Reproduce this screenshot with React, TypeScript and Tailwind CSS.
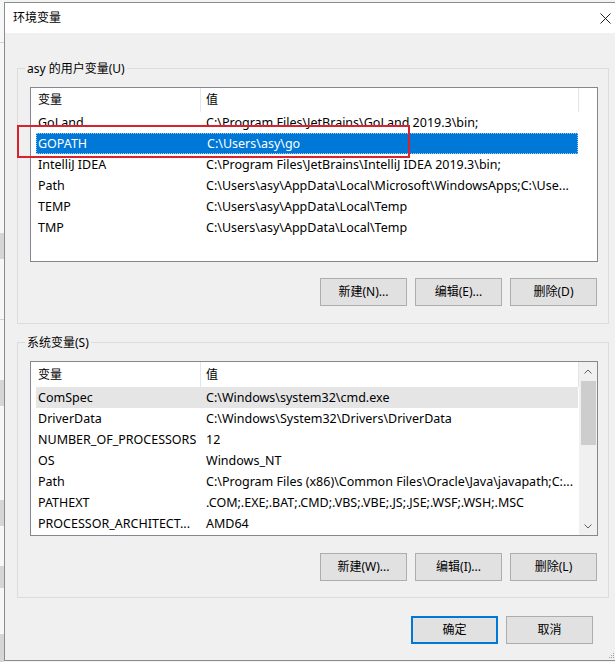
import React from 'react'

type Row = { name: string; value: string }

const userVars: Row[] = [
  { name: 'GoLand', value: 'C:\\Program Files\\JetBrains\\GoLand 2019.3\\bin;' },
  { name: 'GOPATH', value: 'C:\\Users\\asy\\go' },
  { name: 'IntelliJ IDEA', value: 'C:\\Program Files\\JetBrains\\IntelliJ IDEA 2019.3\\bin;' },
  { name: 'Path', value: 'C:\\Users\\asy\\AppData\\Local\\Microsoft\\WindowsApps;C:\\Use...' },
  { name: 'TEMP', value: 'C:\\Users\\asy\\AppData\\Local\\Temp' },
  { name: 'TMP', value: 'C:\\Users\\asy\\AppData\\Local\\Temp' },
]

const systemVars: Row[] = [
  { name: 'ComSpec', value: 'C:\\Windows\\system32\\cmd.exe' },
  { name: 'DriverData', value: 'C:\\Windows\\System32\\Drivers\\DriverData' },
  { name: 'NUMBER_OF_PROCESSORS', value: '12' },
  { name: 'OS', value: 'Windows_NT' },
  { name: 'Path', value: 'C:\\Program Files (x86)\\Common Files\\Oracle\\Java\\javapath;C:...' },
  { name: 'PATHEXT', value: '.COM;.EXE;.BAT;.CMD;.VBS;.VBE;.JS;.JSE;.WSF;.WSH;.MSC' },
  { name: 'PROCESSOR_ARCHITECT...', value: 'AMD64' },
]

function cx(...parts: (string | false | undefined)[]) {
  return parts.filter(Boolean).join(' ')
}

function Chevron({ up }: { up?: boolean }) {
  return (
    <svg width="8" height="5" viewBox="0 0 8 5" className="block">
      <path
        d={up ? 'M0.5 4.5 L4 1 L7.5 4.5' : 'M0.5 0.5 L4 4 L7.5 0.5'}
        fill="none"
        stroke="#606060"
        strokeWidth="1"
      />
    </svg>
  )
}

function VarList({
  rows,
  selected,
  hovered,
  scroll,
  headerH = 'h-[24px]',
}: {
  rows: Row[]
  selected?: number
  hovered?: number
  scroll?: boolean
  headerH?: string
}) {
  return (
    <div className="flex h-[175px] w-[568px] border border-[#828790] bg-white text-[12.5px]">
      <div className="flex min-w-0 flex-1 flex-col pl-[5px]">
        <div className={cx('flex shrink-0 items-center text-[12px]', headerH)}>
          <div className="flex h-full w-[164px] items-center pl-[2px]">变量</div>
          <div className="h-full w-px bg-[#e5e5e5]" />
          <div className="flex h-full flex-1 items-center pl-[5px]">值</div>
          <div className="h-full w-px bg-[#e5e5e5]" />
        </div>
        {rows.map((r, i) => (
          <div
            key={r.name}
            className={cx(
              'flex h-[21px] w-[542px] shrink-0 items-center pt-[1px]',
              i === selected && 'border border-dotted border-[#9cc7ee] bg-[#0078d7] text-white',
              i === hovered && 'bg-[#e5e5e5]'
            )}
          >
            <div className={cx('w-[165px] truncate', i === selected ? 'pl-[1px]' : 'pl-[2px]')}>
              {r.name}
            </div>
            <div className="flex-1 truncate pl-[5px]">{r.value}</div>
          </div>
        ))}
      </div>
      <div className="flex w-[18px] shrink-0 flex-col">
        {scroll && (
          <div className="flex h-full flex-col items-center bg-[#f0f0f0]">
            <div className="flex h-[19px] items-center justify-center">
              <Chevron up />
            </div>
            <div className="h-[64px] w-[15px] bg-[#cdcdcd]" />
            <div className="flex-1" />
            <div className="flex h-[17px] items-center justify-center">
              <Chevron />
            </div>
          </div>
        )}
      </div>
    </div>
  )
}

function Btn({ children, primary }: { children: React.ReactNode; primary?: boolean }) {
  return (
    <button
      className={cx(
        'flex h-[28px] w-[87px] items-center justify-center bg-[#e1e1e1] text-[12px]',
        primary ? 'border-2 border-[#0078d7]' : 'border border-[#adadad]'
      )}
    >
      {children}
    </button>
  )
}

function Group({
  title,
  children,
  buttons,
  listTop,
  btnTop,
}: {
  title: string
  children: React.ReactNode
  buttons: string[]
  listTop: string
  btnTop: string
}) {
  return (
    <fieldset className="ml-[12px] w-[592px] border border-[#dcdcdc] p-0">
      <legend className="ml-[7px] px-[2px] leading-[17px]">{title}</legend>
      <div className={cx('pl-[12px]', listTop)}>
        {children}
        <div className={cx('flex w-[567px] justify-end gap-[8px]', btnTop)}>
          {buttons.map((b) => (
            <Btn key={b}>{b}</Btn>
          ))}
        </div>
      </div>
    </fieldset>
  )
}

function BackStrip() {
  return (
    <div className="flex w-[4px] shrink-0 flex-col bg-[#f7f7f7]">
      <div className="mt-[40px] h-px bg-[#d4d4d4]" />
      <div className="mt-[190px] h-[26px] bg-[#d6d6d6]" />
      <div className="mt-[60px] h-px bg-[#d4d4d4]" />
      <div className="mt-[60px] h-[26px] bg-[#d6d6d6]" />
      <div className="mt-[94px] h-[26px] bg-[#d6d6d6]" />
      <div className="mt-[40px] h-[22px] bg-[#d6d6d6]" />
      <div className="mt-[46px] h-[28px] bg-[#d6d6d6]" />
    </div>
  )
}

export default function App() {
  return (
    <div
      className="relative flex h-[662px] w-[615px] overflow-hidden bg-[#f3f3f3] pt-[2px] text-[12px] text-black"
      style={{ fontFamily: '"Noto Sans", "Noto Sans CJK SC", sans-serif' }}
    >
      <BackStrip />
      <div className="flex h-[659px] w-[614px] shrink-0 flex-col border border-[#8c8c8c] bg-[#f0f0f0]">
        <div className="flex h-[30px] shrink-0 items-center justify-between bg-white pl-[8px] pr-[5px]">
          <span>环境变量</span>
          <svg width="11" height="11" viewBox="0 0 11 11" className="mr-[1px]">
            <path d="M0.5 0.5 L10.5 10.5 M10.5 0.5 L0.5 10.5" stroke="#222" strokeWidth="1" />
          </svg>
        </div>

        <div className="mt-[27px]">
          <Group
            title="asy 的用户变量(U)"
            buttons={['新建(N)...', '编辑(E)...', '删除(D)']}
            listTop="pt-[10px] pb-[17px]"
            btnTop="mt-[16px]"
          >
            <VarList rows={userVars} selected={1} />
          </Group>
        </div>

        <div className="mt-[10px]">
          <Group
            title="系统变量(S)"
            buttons={['新建(W)...', '编辑(I)...', '删除(L)']}
            listTop="pt-[10px] pb-[16px]"
            btnTop="mt-[17px]"
          >
            <VarList rows={systemVars} hovered={0} scroll headerH="h-[25px]" />
          </Group>
        </div>

        <div className="mt-[18px] flex justify-end gap-[8px] pr-[24px]">
          <Btn primary>确定</Btn>
          <Btn>取消</Btn>
        </div>
      </div>

      {/* red annotation box */}
      <div className="pointer-events-none absolute left-[17px] top-[125px] h-[33px] w-[393px] border-2 border-[#d9232c]" />

      {/* resize grip */}
      <svg width="6" height="6" viewBox="0 0 6 6" className="absolute left-[609px] top-[653px]">
        <rect x="4" y="0" width="1" height="1" fill="#a0a0a0" />
        <rect x="2" y="2" width="1" height="1" fill="#a0a0a0" />
        <rect x="4" y="2" width="1" height="1" fill="#a0a0a0" />
        <rect x="0" y="4" width="1" height="1" fill="#a0a0a0" />
        <rect x="2" y="4" width="1" height="1" fill="#a0a0a0" />
        <rect x="4" y="4" width="1" height="1" fill="#a0a0a0" />
      </svg>
    </div>
  )
}
